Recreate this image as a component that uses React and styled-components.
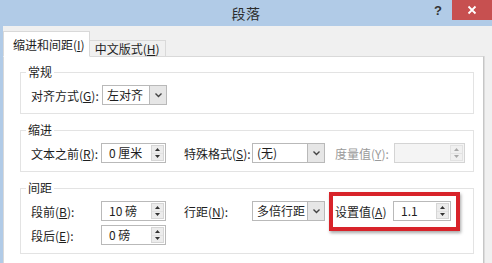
import React from "react";
import styled, { createGlobalStyle } from "styled-components";

const GlobalStyle = createGlobalStyle`
  html, body {
    margin: 0;
    padding: 0;
  }
  body {
    width: 492px;
    height: 263px;
    overflow: hidden;
    background: #f0f0f0;
    font-family: "Noto Sans CJK SC", "Noto Sans", sans-serif;
    color: #1e1e1e;
  }
`;

const Window = styled.div`
  width: 492px;
  height: 263px;
  display: flex;
  flex-direction: column;
  background: #f0f0f0;
`;

const TitleBar = styled.div`
  height: 26px;
  flex: none;
  background: #b1cbe7;
  display: grid;
  grid-template-columns: 1fr auto 1fr;
  align-items: center;
`;

const Title = styled.div`
  grid-column: 2;
  font-size: 14px;
  color: #2b2b2b;
  letter-spacing: 0.5px;
`;

const Controls = styled.div`
  grid-column: 3;
  justify-self: end;
  align-self: start;
  display: flex;
  align-items: flex-start;
`;

const Help = styled.span`
  font-family: "Liberation Sans", sans-serif;
  font-weight: bold;
  font-size: 13px;
  color: #333;
  margin: 3px 10px 0 0;
`;

const Close = styled.div`
  width: 40px;
  height: 20px;
  background: #c75050;
  display: flex;
  align-items: center;
  justify-content: center;
`;

const Body = styled.div`
  flex: 1;
  display: flex;
  flex-direction: column;
  border-left: 3px solid #b1cbe7;
  padding: 6px 8px 0 0;
  min-height: 0;
`;

const TabRow = styled.div`
  display: flex;
  align-items: flex-end;
  height: 25px;
  margin-bottom: -1px;
  position: relative;
  z-index: 1;
`;

const Tab = styled.div`
  box-sizing: border-box;
  height: ${(p) => (p.$active ? 26 : 17)}px;
  padding: ${(p) => (p.$active ? "0 4px 0 9px" : "0 5px 0 5px")};
  background: ${(p) => (p.$active ? "#ffffff" : "#f0f0f0")};
  border: 1px solid #d9d9d9;
  border-bottom: ${(p) => (p.$active ? "1px solid #ffffff" : "1px solid #d9d9d9")};
  ${(p) => !p.$active && "border-left: none;"}
  display: flex;
  align-items: center;
  font-size: 12px;
  white-space: nowrap;
`;

const Panel = styled.div`
  flex: 1;
  background: #ffffff;
  border: 1px solid #d9d9d9;
  border-bottom: none;
  border-right-color: #c6c6c6;
  box-shadow: 1px 0 0 #dcdcdc;
  padding: 7px 9px 0 16px;
  display: flex;
  flex-direction: column;
  gap: 8px;
`;

const Group = styled.fieldset`
  margin: 0;
  padding: 5px 0 8px 10px;
  border: 1px solid #e3e3e3;
  min-width: 0;
  display: flex;
  flex-direction: column;
  gap: 4px;
`;

const Legend = styled.legend`
  font-size: 12px;
  line-height: 16px;
  padding: 0 2px;
  margin-left: -5px;
`;

const Row = styled.div`
  display: flex;
  align-items: center;
  height: 20px;
`;

const Label = styled.span`
  flex: none;
  width: ${(p) => p.$w || 70}px;
  margin-left: ${(p) => p.$ml || 0}px;
  font-size: 12px;
  white-space: nowrap;
  color: ${(p) => (p.$disabled ? "#9a9a9a" : "#1e1e1e")};
`;

const Spin = styled.div`
  box-sizing: border-box;
  flex: none;
  width: ${(p) => p.$w}px;
  height: 20px;
  border: 1px solid ${(p) => (p.$disabled ? "#d4d4d4" : "#b9b9b9")};
  background: ${(p) => (p.$disabled ? "#f4f4f4" : "#ffffff")};
  display: flex;
  align-items: stretch;
`;

const Value = styled.span`
  flex: 1;
  padding-left: 7px;
  font-size: 12px;
  line-height: 18px;
  white-space: nowrap;
`;

const Arrows = styled.div`
  width: 13px;
  margin: 1px 1px 1px 0;
  background: ${(p) => (p.$disabled ? "#f0f0f0" : "#ececec")};
  border: 1px solid ${(p) => (p.$disabled ? "#e2e2e2" : "#d6d6d6")};
  box-sizing: border-box;
  display: flex;
  flex-direction: column;
  color: ${(p) => (p.$disabled ? "#a8a8a8" : "#333")};
`;

const ArrowHalf = styled.div`
  flex: 1;
  display: flex;
  align-items: center;
  justify-content: center;
  & + & {
    border-top: 1px solid ${(p) => (p.$disabled ? "#e2e2e2" : "#d0d0d0")};
  }
`;

const Select = styled.div`
  box-sizing: border-box;
  flex: none;
  width: ${(p) => p.$w}px;
  height: 20px;
  border: 1px solid #b9b9b9;
  background: #fff;
  display: flex;
`;

const SelectText = styled.span`
  flex: 1;
  padding-left: 4px;
  font-size: 12px;
  line-height: 18px;
  white-space: nowrap;
`;

const DropButton = styled.div`
  width: 16px;
  background: #e6e6e6;
  border-left: 1px solid #b9b9b9;
  display: flex;
  align-items: center;
  justify-content: center;
`;

const Highlight = styled.div`
  flex: none;
  display: flex;
  align-items: center;
  margin: -9px 0 -10px 4px;
  padding: 5px 5px 6px 2px;
  border: 4px solid #d8232a;
  box-shadow: 1px 2px 3px rgba(0, 0, 0, 0.35);
`;

const Chevron = () => (
  <svg width="9" height="6" viewBox="0 0 9 6">
    <polyline points="1.5,1.5 4.5,4.5 7.5,1.5" fill="none" stroke="#444" strokeWidth="1.4" />
  </svg>
);

const Tri = ({ up }) => (
  <svg width="5" height="3" viewBox="0 0 5 3">
    <polygon points={up ? "0,3 2.5,0 5,3" : "0,0 5,0 2.5,3"} fill="currentColor" />
  </svg>
);

const SpinBox = ({ value, w, disabled }) => (
  <Spin $w={w} $disabled={disabled}>
    <Value>{value}</Value>
    <Arrows $disabled={disabled}>
      <ArrowHalf $disabled={disabled}>
        <Tri up />
      </ArrowHalf>
      <ArrowHalf $disabled={disabled}>
        <Tri />
      </ArrowHalf>
    </Arrows>
  </Spin>
);

const Dropdown = ({ value, w }) => (
  <Select $w={w}>
    <SelectText>{value}</SelectText>
    <DropButton>
      <Chevron />
    </DropButton>
  </Select>
);

const Key = ({ text, k }) => (
  <>
    {text}(<u>{k}</u>)
  </>
);

export default function App() {
  return (
    <>
      <GlobalStyle />
      <Window>
        <TitleBar>
          <Title>段落</Title>
          <Controls>
            <Help>?</Help>
            <Close>
              <svg width="10" height="10" viewBox="0 0 10 10">
                <path d="M1.5 1.5 L8.5 8.5 M8.5 1.5 L1.5 8.5" stroke="#fff" strokeWidth="1.8" />
              </svg>
            </Close>
          </Controls>
        </TitleBar>
        <Body>
          <TabRow>
            <Tab $active>
              <Key text="缩进和间距" k="I" />
            </Tab>
            <Tab>
              <Key text="中文版式" k="H" />
            </Tab>
          </TabRow>
          <Panel>
            <Group>
              <Legend>常规</Legend>
              <Row>
                <Label $w={71}>
                  <Key text="对齐方式" k="G" />:
                </Label>
                <Dropdown value="左对齐" w={65} />
              </Row>
            </Group>
            <Group>
              <Legend>缩进</Legend>
              <Row>
                <Label>
                  <Key text="文本之前" k="R" />:
                </Label>
                <SpinBox value="0 厘米" w={65} />
                <Label $w={68} $ml={18}>
                  <Key text="特殊格式" k="S" />:
                </Label>
                <Dropdown value="(无)" w={73} />
                <Label $w={59} $ml={10} $disabled>
                  <Key text="度量值" k="Y" />:
                </Label>
                <SpinBox value="" w={71} disabled />
              </Row>
            </Group>
            <Group>
              <Legend>间距</Legend>
              <Row>
                <Label>
                  <Key text="段前" k="B" />:
                </Label>
                <SpinBox value="10 磅" w={65} />
                <Label $w={68} $ml={18}>
                  <Key text="行距" k="N" />:
                </Label>
                <Dropdown value="多倍行距" w={73} />
                <Highlight>
                  <Label $w={58}>
                    <Key text="设置值" k="A" />
                  </Label>
                  <SpinBox value="1.1" w={58} />
                </Highlight>
              </Row>
              <Row>
                <Label>
                  <Key text="段后" k="E" />:
                </Label>
                <SpinBox value="0 磅" w={65} />
              </Row>
            </Group>
          </Panel>
        </Body>
      </Window>
    </>
  );
}
